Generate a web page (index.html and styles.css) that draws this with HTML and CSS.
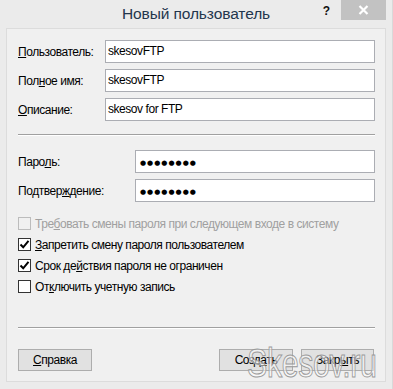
FILE: index.html
```html
<!DOCTYPE html>
<html lang="ru">
<head>
<meta charset="utf-8">
<title>Новый пользователь</title>
<link rel="stylesheet" href="styles.css">
</head>
<body>
<div class="window">
  <div class="titlebar">
    <div class="tb-side"></div>
    <div class="title">Новый пользователь</div>
    <div class="tb-side tb-right">
      <span class="help">?</span>
      <span class="close"><svg width="11" height="10" viewBox="0 0 11 10"><path d="M1.5 1 L9.5 9 M9.5 1 L1.5 9" stroke="#fff" stroke-width="2.2" fill="none"/></svg></span>
    </div>
  </div>
  <div class="panel">
    <div class="fields">
      <div class="row"><span class="label label-user"><u>П</u>ользователь:</span><span class="input">skesovFTP</span></div>
      <div class="row"><span class="label label-user">Пол<u>н</u>ое имя:</span><span class="input">skesovFTP</span></div>
      <div class="row"><span class="label label-user"><u>О</u>писание:</span><span class="input">skesov for FTP</span></div>
    </div>
    <div class="sep sep-top"></div>
    <div class="fields">
      <div class="row"><span class="label label-pass">Паро<u>л</u>ь:</span><span class="input"><span class="dots">●●●●●●●●</span></span></div>
      <div class="row"><span class="label label-pass">Подтвер<u>ж</u>дение:</span><span class="input"><span class="dots">●●●●●●●●</span></span></div>
    </div>
    <div class="checks">
      <div class="check disabled"><span class="box"></span><span>Тре<u>б</u>овать смены пароля при следующем входе в систему</span></div>
      <div class="check"><span class="box"><svg width="11" height="11" viewBox="0 0 11 11"><path d="M1.5 5.5 L4.2 8.3 L9.5 1.8" stroke="#000" stroke-width="2" fill="none"/></svg></span><span><u>З</u>апретить смену пароля пользователем</span></div>
      <div class="check"><span class="box"><svg width="11" height="11" viewBox="0 0 11 11"><path d="M1.5 5.5 L4.2 8.3 L9.5 1.8" stroke="#000" stroke-width="2" fill="none"/></svg></span><span>Срок де<u>й</u>ствия пароля не ограничен</span></div>
      <div class="check"><span class="box"></span><span>От<u>к</u>лючить учетную запись</span></div>
    </div>
    <div class="sep sep-bottom"></div>
    <div class="buttons">
      <span class="btn"><u>С</u>правка</span>
      <div class="btn-group">
        <span class="btn">Созд<u>а</u>ть</span>
        <span class="btn">Закр<u>ы</u>ть</span>
      </div>
    </div>
  </div>
  <div class="watermark">Skesov.ru</div>
</div>
</body>
</html>
```
FILE: styles.css
```css
* { box-sizing: border-box; }
html, body { margin: 0; padding: 0; }
body {
  width: 393px;
  height: 389px;
  background: #ebebeb;
  font-family: "Liberation Sans", Arial, sans-serif;
  font-size: 12px;
  letter-spacing: -0.45px;
  color: #000;
  overflow: hidden;
}
.window {
  position: relative;
  width: 393px;
  height: 389px;
  border-right: 1px solid #d9d9d9;
}
.titlebar {
  height: 28px;
  display: grid;
  grid-template-columns: 1fr auto 1fr;
  align-items: start;
}
.title {
  font-size: 15.5px;
  color: #23364d;
  padding-top: 5px;
  line-height: 18px;
  letter-spacing: -0.1px;
}
.tb-right {
  display: flex;
  justify-content: flex-end;
  align-items: flex-start;
  padding-right: 6px;
}
.help {
  font-weight: bold;
  font-size: 12px;
  color: #111;
  margin-top: 4px;
  margin-right: 11px;
  line-height: 14px;
  letter-spacing: 0;
}
.close {
  width: 45px;
  height: 20px;
  background: #c2c2c2;
  display: flex;
  align-items: center;
  justify-content: center;
}
.panel {
  margin-left: 6px;
  width: 380px;
  background: #f0f0f0;
  border: 1px solid #dcdcdc;
  padding: 11px 10px 10px 11px;
  display: flex;
  flex-direction: column;
}
.fields {
  display: flex;
  flex-direction: column;
  gap: 6px;
}
.row {
  display: flex;
  align-items: center;
  height: 23px;
}
.label { flex: none; }
.label-user { width: 87px; }
.label-pass { width: 117px; }
.input {
  flex: 1;
  height: 23px;
  background: #fff;
  border: 1px solid #abadb3;
  padding: 3px 2px 0 2px;
  line-height: 15px;
  white-space: nowrap;
}
.dots {
  font-family: "DejaVu Sans", sans-serif;
  font-size: 7px;
  letter-spacing: 1px;
  line-height: 15px;
  padding-left: 2px;
}
.sep {
  height: 2px;
  border-top: 1px solid #a0a0a0;
  border-bottom: 1px solid #ffffff;
}
.sep-top { margin: 13px 0 14px; }
.sep-bottom { margin: 34px 0 20px; }
.checks {
  margin-top: 15px;
  display: flex;
  flex-direction: column;
  gap: 8px;
}
.check {
  display: flex;
  align-items: center;
  height: 13px;
  gap: 4px;
  white-space: nowrap;
}
.box {
  width: 13px;
  height: 13px;
  flex: none;
  background: #fff;
  border: 1px solid #333;
  display: flex;
  align-items: center;
  justify-content: center;
}
.check.disabled { color: #a0a0a0; }
.check.disabled .box {
  background: #f0f0f0;
  border-color: #bcbcbc;
}
.buttons {
  display: flex;
  justify-content: space-between;
  padding-right: 1px;
}
.btn-group { display: flex; gap: 8px; }
.btn {
  width: 73px;
  height: 22px;
  background: #e1e1e1;
  border: 1px solid #adadad;
  display: flex;
  align-items: center;
  justify-content: center;
}
.btn:first-child { width: 74px; }
.watermark {
  position: absolute;
  left: 247px;
  top: 341px;
  font-family: "Liberation Sans", Arial, sans-serif;
  font-size: 40px;
  line-height: 44px;
  color: rgba(255, 255, 255, 0.55);
  -webkit-text-stroke: 1px #999999;
  transform: scaleX(0.76);
  transform-origin: left top;
  letter-spacing: -0.5px;
  pointer-events: none;
}
```
